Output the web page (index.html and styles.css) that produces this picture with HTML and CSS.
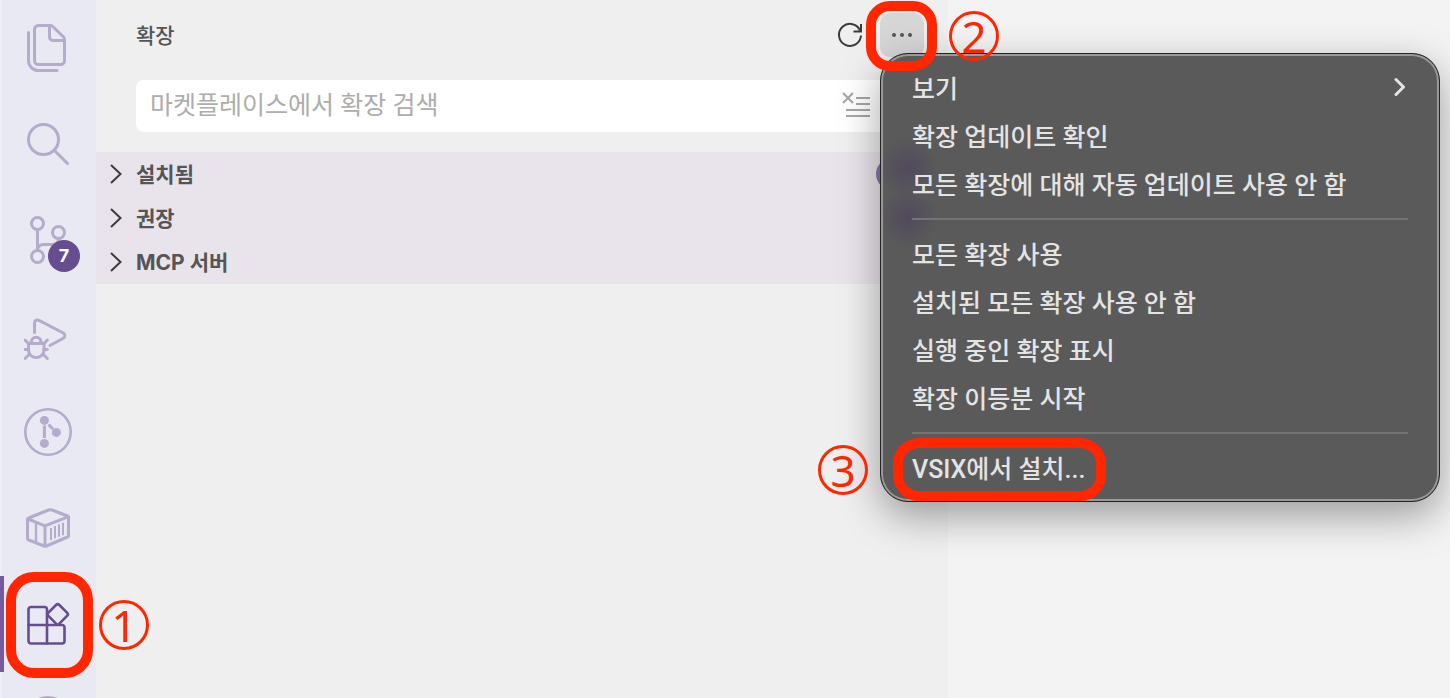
FILE: index.html
```html
<!DOCTYPE html>
<html lang="ko">
<head>
    <meta charset="UTF-8">
    <meta name="viewport" content="width=device-width, initial-scale=1.0">
    <title>확장</title>
    <link rel="stylesheet" href="styles.css">
</head>
<body>
    <div class="workbench">
        <nav class="activity-bar">
            <button class="activity-item" aria-label="탐색기">
                <svg viewBox="0 0 48 48">
                    <path d="M14.5 1.5H26a4 4 0 0 1 3 1.2L39.3 12.8a4 4 0 0 1 1.2 3V36.5a4 4 0 0 1-4 4H14.5a4 4 0 0 1-4-4V5.5a4 4 0 0 1 4-4Z"/>
                    <path d="M25.5 2V13a3.5 3.5 0 0 0 3.5 3.5H40"/>
                    <path d="M4.5 8.5V36.5a10 10 0 0 0 10 10H33"/>
                </svg>
            </button>
            <button class="activity-item" aria-label="검색">
                <svg viewBox="0 0 48 48">
                    <circle cx="19.5" cy="19.5" r="15"/>
                    <path d="M30.5 30.5 43.5 43.5"/>
                </svg>
            </button>
            <button class="activity-item" aria-label="소스 제어">
                <svg viewBox="0 0 48 48">
                    <circle cx="13.5" cy="7.5" r="6"/>
                    <circle cx="34.5" cy="16.5" r="6"/>
                    <circle cx="13.5" cy="40.5" r="6"/>
                    <path d="M13.5 13.5V34.5Q13.5 28.5 19.5 28.5H28Q34.5 28.5 34.5 22.5"/>
                </svg>
                <span class="badge">7</span>
            </button>
            <button class="activity-item" aria-label="실행 및 디버그">
                <svg viewBox="0 0 48 48">
                    <path d="M10.5 20.5V11a3 3 0 0 1 4.5-2.6L39.3 21a3 3 0 0 1 0 5.2L26 33.5"/>
                    <path d="M4.5 31.5H20V38.5a7.8 8 0 0 1-15.5 0Z"/>
                    <path d="M7.5 31.5V30a4.7 4.7 0 0 1 9.4 0V31.5"/>
                    <path d="M4.5 31.5 1 28M20 31.5 23.3 28M4.5 37.5H1M20 37.5H23.3M5.5 42 1 46.5M19 42 23.3 46.5"/>
                </svg>
            </button>
            <button class="activity-item" aria-label="GitLens">
                <svg viewBox="0 0 48 48">
                    <circle cx="24" cy="24" r="22.7" stroke-width="2.6"/>
                    <path d="M20.4 17.5V30M24.5 16.5 29 21" stroke-linecap="butt"/>
                    <g class="filled">
                        <circle cx="20.4" cy="12.4" r="4.5"/>
                        <circle cx="32.4" cy="24.4" r="4.5"/>
                        <circle cx="20.4" cy="35.4" r="4.5"/>
                    </g>
                </svg>
            </button>
            <button class="activity-item" aria-label="컨테이너">
                <svg viewBox="0 0 48 48">
                    <path d="M4.8 14 24.5 6a5 5 0 0 1 3.5 0L43.5 12a1.5 1.5 0 0 1 1 1.5V31.5a1.5 1.5 0 0 1-1 1.5L22.5 42a3 3 0 0 1-2.5 0L4.8 36a2 2 0 0 1-1.3-2V16a2 2 0 0 1 1.3-2Z"/>
                    <path d="M4 15 21 21.8 44 12.8M21 21.8V42"/>
                    <path d="M12 19V38.5" stroke-width="2.4"/>
                    <path d="M27 24V36M31 22V34.3M35 20.3V32.7M39 18.7V31.3" stroke-width="2" stroke-linecap="butt"/>
                </svg>
            </button>
            <button class="activity-item active" aria-label="확장">
                <svg viewBox="0 0 48 48">
                    <path d="M7 7H20.5a2.5 2.5 0 0 1 2.5 2.5V25H38a2.5 2.5 0 0 1 2.5 2.5V41a2.5 2.5 0 0 1-2.5 2.5H7A2.5 2.5 0 0 1 4.5 41V9.5A2.5 2.5 0 0 1 7 7Z" stroke-width="2.6"/>
                    <path d="M4.5 25H23V43.5" stroke-width="2.6"/>
                    <rect x="26" y="6.5" width="15.5" height="15.5" rx="2" transform="rotate(45 33.7 14.2)" stroke-width="2.6"/>
                </svg>
                <span class="mark mark-activity"></span>
                <span class="step step-1">1</span>
            </button>
            <button class="activity-item" aria-label="계정">
                <svg viewBox="0 0 48 48">
                    <circle cx="24" cy="24" r="22.5"/>
                </svg>
            </button>
        </nav>

        <aside class="sidebar">
            <header class="sidebar-header">
                <h2 class="sidebar-title">확장</h2>
                <div class="actions">
                    <button class="action" aria-label="새로 고침">
                        <svg viewBox="0 0 28 28" width="28" height="28">
                            <path d="M24.3 10A11 11 0 1 0 25 14.5M25 3V10.5H17.5" fill="none" stroke="#3b3b3b" stroke-width="2"/>
                        </svg>
                    </button>
                    <div class="more">
                        <button class="action more-button" aria-label="보기 및 추가 작업">
                            <svg viewBox="0 0 44 44" width="44" height="44">
                                <g fill="#555">
                                    <circle cx="14" cy="22" r="2"/>
                                    <circle cx="22" cy="22" r="2"/>
                                    <circle cx="30" cy="22" r="2"/>
                                </g>
                            </svg>
                        </button>
                        <div class="menu" role="menu">
                            <button class="menu-item" role="menuitem">보기
                                <svg viewBox="0 0 14 20" width="14" height="20">
                                    <path d="M2 2.5 9.5 10 2 17.5" fill="none" stroke="#e4e4e4" stroke-width="3" stroke-linecap="round" stroke-linejoin="round"/>
                                </svg>
                            </button>
                            <button class="menu-item" role="menuitem">확장 업데이트 확인</button>
                            <button class="menu-item" role="menuitem">모든 확장에 대해 자동 업데이트 사용 안 함</button>
                            <hr class="separator">
                            <button class="menu-item" role="menuitem">모든 확장 사용</button>
                            <button class="menu-item" role="menuitem">설치된 모든 확장 사용 안 함</button>
                            <button class="menu-item" role="menuitem">실행 중인 확장 표시</button>
                            <button class="menu-item" role="menuitem">확장 이등분 시작</button>
                            <hr class="separator">
                            <button class="menu-item" role="menuitem">VSIX에서 설치...
                                <span class="mark mark-vsix"></span>
                                <span class="step step-3">3</span>
                            </button>
                        </div>
                        <span class="mark mark-more"></span>
                        <span class="step step-2">2</span>
                    </div>
                </div>
            </header>

            <div class="search">
                <input type="text" class="search-input" placeholder="마켓플레이스에서 확장 검색" aria-label="마켓플레이스에서 확장 검색">
                <button class="action" aria-label="검색 결과 지우기">
                    <svg viewBox="0 0 28 28" width="28" height="28">
                        <path d="M1 1 11 11M11 1 1 11M14 6H28M14 12H28M4 18H28M4 24H28" fill="none" stroke="#a6a6a6" stroke-width="2"/>
                    </svg>
                </button>
            </div>

            <div class="sections">
                <button class="section">
                    <svg class="chevron" viewBox="0 0 12 20"><path d="M1 1 10.5 10 1 19"/></svg>
                    <span class="section-title">설치됨</span>
                    <span class="count"></span>
                </button>
                <button class="section">
                    <svg class="chevron" viewBox="0 0 12 20"><path d="M1 1 10.5 10 1 19"/></svg>
                    <span class="section-title">권장</span>
                </button>
                <button class="section">
                    <svg class="chevron" viewBox="0 0 12 20"><path d="M1 1 10.5 10 1 19"/></svg>
                    <span class="section-title">MCP 서버</span>
                </button>
            </div>
        </aside>

        <main class="editor"></main>
    </div>
</body>
</html>
```
FILE: styles.css
```css
* {
    box-sizing: border-box;
}
body {
    margin: 0;
    font-family: Inter, "Noto Sans CJK KR", sans-serif;
    color: #555;
}
button {
    border: none;
    padding: 0;
    background: none;
    font: inherit;
    color: inherit;
    cursor: pointer;
}
.workbench {
    display: flex;
    height: 100vh;
    overflow: hidden;
}

/* activity bar */
.activity-bar {
    flex: none;
    width: 96px;
    display: flex;
    flex-direction: column;
    background: #e9e9f3;
    box-shadow: inset 2px 0 #eeeef4;
}
.activity-item {
    flex: none;
    position: relative;
    display: flex;
    align-items: center;
    justify-content: center;
    height: 96px;
    color: #b4abcd;
}
.activity-item svg {
    width: 48px;
    height: 48px;
    fill: none;
    stroke: currentColor;
    stroke-width: 3;
    stroke-linecap: round;
    stroke-linejoin: round;
}
.activity-item .filled {
    fill: currentColor;
    stroke: none;
}
.activity-item.active {
    color: #664d8f;
    box-shadow: inset 4px 0 #755b9d;
}
.badge {
    position: absolute;
    right: 16px;
    bottom: 16px;
    width: 32px;
    height: 32px;
    border-radius: 50%;
    background: #664d8f;
    color: #fff;
    font-size: 18px;
    font-weight: 700;
    line-height: 32px;
    text-align: center;
}

/* sidebar */
.sidebar {
    flex: none;
    width: 852px;
    background: #efefef;
}
.sidebar-header {
    display: flex;
    align-items: center;
    justify-content: space-between;
    height: 70px;
    padding: 0 24px 0 40px;
}
.sidebar-title {
    margin: 0;
    padding-bottom: 3px;
    font-size: 21px;
    font-weight: 500;
}
.actions {
    display: flex;
    align-items: center;
    gap: 16px;
}
.action {
    display: flex;
}
.more {
    position: relative;
}
.more-button {
    border-radius: 10px;
    background: #d6d6d6;
}
.search {
    display: flex;
    align-items: center;
    height: 52px;
    margin: 10px 24px 20px 40px;
    padding: 0 54px 0 14px;
    border-radius: 8px;
    background: #fff;
}
.search-input {
    flex: 1;
    border: none;
    outline: none;
    padding: 0 0 2px;
    background: none;
    font-family: Roboto, "Noto Sans CJK KR", sans-serif;
    font-size: 25px;
}
.search-input::placeholder {
    color: #adadad;
}
.sections {
    background: #e9e4eb;
}
.section {
    display: flex;
    align-items: center;
    gap: 14px;
    width: 100%;
    height: 44px;
    padding: 0 22px 0 14px;
    font-size: 21px;
    font-weight: 700;
}
.section-title {
    padding-bottom: 2px;
}
.chevron {
    width: 12px;
    height: 20px;
    fill: none;
    stroke: #3b3b3b;
    stroke-width: 2;
}
.count {
    width: 50px;
    height: 32px;
    margin-left: auto;
    border-radius: 16px;
    background: #8878a9;
}
.editor {
    flex: 1;
    background: #f3f3f3;
}

/* overflow menu */
.menu {
    position: absolute;
    top: 40px;
    left: 0;
    width: 560px;
    padding: 10px 31px 9px;
    border: 1px solid #222;
    border-radius: 28px;
    background:
        radial-gradient(circle at 27px 114px, #51495d, transparent 30px),
        radial-gradient(circle at 27px 164px, #51495d, transparent 30px),
        #5a5a5a;
    box-shadow: inset 0 0 0 2px #999, 0 14px 40px rgba(0, 0, 0, 0.36);
    font-family: Roboto, "Noto Sans CJK KR", sans-serif;
    font-size: 25px;
    font-weight: 500;
    color: #e4e4e4;
}
.menu-item {
    position: relative;
    display: flex;
    align-items: center;
    justify-content: space-between;
    width: 100%;
    height: 48px;
    padding-bottom: 2px;
    white-space: nowrap;
}
.separator {
    height: 2px;
    margin: 10px 0;
    border: none;
    background: #747474;
}

/* numbered walkthrough marks */
.mark {
    position: absolute;
    border: 10px solid #ff2600;
}
.mark-activity {
    inset: -4px 3px -6px 6px;
    border-radius: 28px;
}
.mark-more {
    inset: -12px -13px -14px -14px;
    border-radius: 24px;
}
.mark-vsix {
    top: -6px;
    left: -19px;
    width: 213px;
    height: 63px;
    border-radius: 26px;
}
.step {
    position: absolute;
    width: 50px;
    height: 50px;
    border: 3px solid #ff2600;
    border-radius: 50%;
    color: #ff2600;
    font-family: "Noto Sans", sans-serif;
    font-size: 44px;
    font-weight: 400;
    line-height: 44px;
    text-align: center;
}
.step-1 {
    top: 24px;
    left: 99px;
}
.step-2 {
    top: -2px;
    left: 69px;
}
.step-3 {
    top: 1px;
    left: -94px;
}
```
